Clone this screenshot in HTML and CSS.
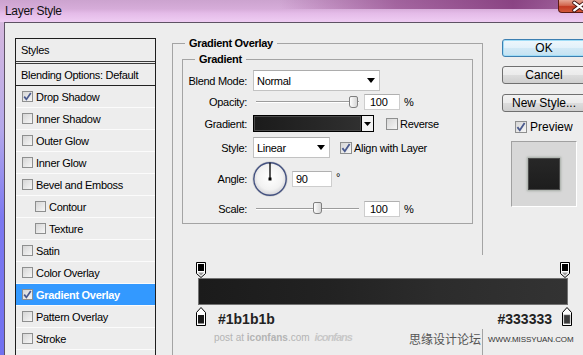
FILE: index.html
```html
<!DOCTYPE html>
<html>
<head>
<meta charset="utf-8">
<title>Layer Style</title>
<link rel="stylesheet" href="styles.css">
</head>
<body>
<div class="window">
  <div class="titlebar">
    <span class="title">Layer Style</span>
    <div class="close">
      <svg width="43" height="13" viewBox="0 0 43 13"><path d="M16 2.5L27 10.5M27 2.5L16 10.5" stroke="#3a1010" stroke-width="4.2" stroke-linecap="round"/><path d="M16 2.5L27 10.5M27 2.5L16 10.5" stroke="#fff" stroke-width="2.4" stroke-linecap="round"/></svg>
    </div>
  </div>
  <div class="frame">
    <div class="frame-edge"></div>
    <div class="dialog">
      <div class="styles-panel">
        <div class="sp-head">Styles</div>
        <div class="sp-blend">Blending Options: Default</div>
        <div class="sp-item"><span class="cb"><svg width="9" height="9" viewBox="0 0 9 9"><path d="M1.2 4.6L3.4 7.4L7.8 0.9" fill="none" stroke="#4a5a8e" stroke-width="1.7"/></svg></span>Drop Shadow</div>
        <div class="sp-item"><span class="cb"></span>Inner Shadow</div>
        <div class="sp-item"><span class="cb"></span>Outer Glow</div>
        <div class="sp-item"><span class="cb"></span>Inner Glow</div>
        <div class="sp-item"><span class="cb"></span>Bevel and Emboss</div>
        <div class="sp-item sub"><span class="cb"></span>Contour</div>
        <div class="sp-item sub"><span class="cb"></span>Texture</div>
        <div class="sp-item"><span class="cb"></span>Satin</div>
        <div class="sp-item"><span class="cb"></span>Color Overlay</div>
        <div class="sp-item active"><span class="cb"><svg width="9" height="9" viewBox="0 0 9 9"><path d="M1.2 4.6L3.4 7.4L7.8 0.9" fill="none" stroke="#4a5a8e" stroke-width="1.7"/></svg></span>Gradient Overlay</div>
        <div class="sp-item"><span class="cb"></span>Pattern Overlay</div>
        <div class="sp-item"><span class="cb"></span>Stroke</div>
        <div class="sp-item"></div>
      </div>

      <fieldset class="group outer">
        <legend>Gradient Overlay</legend>
        <fieldset class="group inner">
          <legend>Gradient</legend>
          <div class="row r1">
            <span class="lbl">Blend Mode:</span>
            <div class="select w-blend"><span>Normal</span><svg width="8" height="5" viewBox="0 0 8 5"><path d="M0 0H8L4 5Z" fill="#000"/></svg></div>
          </div>
          <div class="row r2">
            <span class="lbl">Opacity:</span>
            <div class="slider"><div class="track"></div><div class="thumb" style="left:93px"></div></div>
            <div class="input">100</div>
            <span class="unit">%</span>
          </div>
          <div class="row r3">
            <span class="lbl">Gradient:</span>
            <div class="grad-field"><div class="grad-swatch"></div><div class="grad-arrow"><svg width="7" height="4" viewBox="0 0 7 4"><path d="M0 0H7L3.5 4Z" fill="#000"/></svg></div></div>
            <span class="cb big rev"></span><span class="cb-text">Reverse</span>
          </div>
          <div class="row r4">
            <span class="lbl">Style:</span>
            <div class="select w-style"><span>Linear</span><svg width="8" height="5" viewBox="0 0 8 5"><path d="M0 0H8L4 5Z" fill="#000"/></svg></div>
            <span class="cb big align"><svg width="10" height="10" viewBox="0 0 10 10"><path d="M1.4 5.1L3.8 8.2L8.6 1" fill="none" stroke="#4a5a8e" stroke-width="1.8"/></svg></span><span class="cb-text">Align with Layer</span>
          </div>
          <div class="row r5">
            <span class="lbl">Angle:</span>
            <svg class="dial" width="36" height="36" viewBox="0 0 36 36">
              <defs><radialGradient id="dg" cx="50%" cy="45%" r="55%"><stop offset="0" stop-color="#ffffff"/><stop offset="0.7" stop-color="#f2f2f2"/><stop offset="1" stop-color="#d4d4d8"/></radialGradient></defs>
              <circle cx="18" cy="18" r="17.2" fill="none" stroke="rgba(0,0,0,0.12)" stroke-width="1"/>
              <circle cx="18" cy="18" r="16.2" fill="url(#dg)" stroke="#42507f" stroke-width="1.4"/>
              <line x1="18" y1="18" x2="18" y2="1.8" stroke="#000" stroke-width="1.3"/>
              <rect x="16.5" y="16.5" width="3" height="3" fill="#000"/>
            </svg>
            <div class="input w-angle">90</div>
            <span class="unit deg">°</span>
          </div>
          <div class="row r6">
            <span class="lbl">Scale:</span>
            <div class="slider"><div class="track"></div><div class="thumb" style="left:57px"></div></div>
            <div class="input">100</div>
            <span class="unit">%</span>
          </div>
        </fieldset>
      </fieldset>

      <div class="side">
        <div class="btn default">OK</div>
        <div class="btn b-cancel">Cancel</div>
        <div class="btn b-new">New Style...</div>
        <div class="preview-row"><span class="cb big"><svg width="10" height="10" viewBox="0 0 10 10"><path d="M1.4 5.1L3.8 8.2L8.6 1" fill="none" stroke="#4a5a8e" stroke-width="1.8"/></svg></span><span>Preview</span></div>
        <div class="preview-box"><div class="preview-swatch"></div></div>
      </div>
    </div>
  </div>

  <div class="editor">
    <div class="stops-top">
      <svg width="10" height="16" viewBox="0 0 10 16"><path d="M0.5 0.5H9.5V11.5L5 15.5L0.5 11.5Z" fill="#fff" stroke="#000"/><rect x="2" y="2" width="6" height="7" fill="#000"/><path d="M2 10.5H8L5 13.8Z" fill="#9a9a9a"/></svg>
      <svg width="10" height="16" viewBox="0 0 10 16"><path d="M0.5 0.5H9.5V11.5L5 15.5L0.5 11.5Z" fill="#fff" stroke="#000"/><rect x="2" y="2" width="6" height="7" fill="#000"/><path d="M2 10.5H8L5 13.8Z" fill="#9a9a9a"/></svg>
    </div>
    <div class="gbar"></div>
    <div class="stops-bottom">
      <div class="stop-group">
        <svg width="10" height="19" viewBox="0 0 10 19"><path d="M5 0.5L9.5 5.5V18.5H0.5V5.5Z" fill="#fff" stroke="#000"/><rect x="2" y="8" width="6" height="8.5" fill="#1b1b1b"/></svg>
        <span class="hex left">#1b1b1b</span>
      </div>
      <div class="stop-group">
        <span class="hex right">#333333</span>
        <svg width="10" height="19" viewBox="0 0 10 19"><path d="M5 0.5L9.5 5.5V18.5H0.5V5.5Z" fill="#fff" stroke="#000"/><rect x="2" y="8" width="6" height="8.5" fill="#3c3c3c" stroke="#777" stroke-width="0.6"/></svg>
      </div>
    </div>
  </div>

  <div class="wm-iconfans"><span>post at <b>iconfans</b>.com</span><span class="logo">iconfans</span></div>
  <div class="wm-missyuan"><span class="cn">思缘设计论坛</span><span class="url">WWW.MISSYUAN.COM</span></div>
</div>
</body>
</html>
```

FILE: styles.css
```css
* { box-sizing: border-box; }
html, body { margin: 0; padding: 0; }
body {
  width: 583px;
  height: 355px;
  overflow: hidden;
  font-family: "Liberation Sans", Arial, sans-serif;
  font-size: 11px;
  letter-spacing: -0.3px;
  color: #000;
  background: #ededed;
}
.window {
  position: relative;
  width: 583px;
  height: 355px;
  overflow: hidden;
  display: flex;
  flex-direction: column;
}

/* title bar */
.titlebar {
  height: 22px;
  flex: none;
  display: flex;
  background:
    linear-gradient(to right, rgba(125,45,115,0) 48%, rgba(125,45,115,0.55) 68%, rgba(115,35,105,0.75) 88%, rgba(115,35,105,0.5) 100%) top left / 100% 9px no-repeat,
    linear-gradient(#cca3cf 0%, #d6acd9 40%, #e4bbe8 60%, #efcdf3 100%);
}
.title {
  padding-left: 5px;
  line-height: 22px;
  font-size: 12px;
  letter-spacing: -0.3px;
  color: #111;
}
.close {
  margin-left: auto;
  margin-right: -18px;
  width: 43px;
  height: 13px;
  border: 1px solid #5c1b14;
  border-top: 0;
  border-radius: 0 0 4px 4px;
  background: linear-gradient(#e6a594, #d2674f 45%, #c23a22 55%, #d2593b);
  display: flex;
}

/* frame */
.frame {
  flex: 1;
  display: flex;
}
.frame-edge {
  width: 4px;
  flex: none;
  background: linear-gradient(#d6b8de 0, #b4a8ea 30%, #7c78f0 55%, #6f6ff0 100%);
}
.dialog {
  flex: 1;
  display: flex;
  align-items: flex-start;
  border-top: 1px solid #5e5264;
  border-left: 1px solid #5e5264;
  background: #ededed;
  padding-left: 10px;
}

/* styles list */
.styles-panel {
  flex: none;
  width: 141px;
  height: 340px;
  margin-top: 15px;
  border: 1px solid #1e1e1e;
}
.sp-head {
  height: 25px;
  display: flex;
  align-items: center;
  padding-left: 5px;
  border-bottom: 3px double #3a3a3a;
}
.sp-blend {
  height: 22px;
  display: flex;
  align-items: center;
  padding-left: 5px;
  border-bottom: 1px solid #222;
}
.sp-item {
  height: 22px;
  display: flex;
  align-items: center;
  gap: 3px;
  padding-left: 6px;
  border-bottom: 1px solid #fbfbfb;
}
.sp-item.sub { padding-left: 19px; }
.sp-item.active {
  background: #3399ff;
  color: #fff;
  font-weight: bold;
}
.cb {
  flex: none;
  width: 11px;
  height: 11px;
  border: 1px solid #8e8f8f;
  background: linear-gradient(135deg, #d6d6d6, #f6f6f6);
  display: flex;
  align-items: center;
  justify-content: center;
}
.cb.big { width: 12px; height: 12px; }

/* group boxes */
fieldset.group {
  margin: 0;
  min-width: 0;
  border: 1px solid #a4a4a4;
}
fieldset.group > legend {
  padding: 0 4px;
  font-weight: bold;
  line-height: 14px;
}
.outer {
  flex: none;
  width: 311px;
  height: 340px;
  margin-top: 13px !important;
  margin-left: 16px !important;
  padding: 2px 9px 0;
}
.outer > legend { margin-left: 3px; }
.inner {
  width: 291px;
  padding: 4px 0 6px;
}
.inner > legend { margin-left: 12px; }

.row {
  display: flex;
  align-items: center;
}
.r1 { height: 21px; }
.r2 { height: 20px; margin-top: 1px; }
.r3 { height: 21px; margin-top: 1px; }
.r4 { height: 21px; margin-top: 3px; }
.r5 { height: 36px; margin-top: 3px; }
.r6 { height: 17px; margin-top: 3px; }
.lbl {
  flex: none;
  width: 64px;
  margin-right: 6px;
  text-align: right;
}
.select {
  height: 21px;
  background: #fff;
  border: 1px solid #c2c2c2;
  border-top-color: #acacac;
  display: flex;
  align-items: center;
  justify-content: space-between;
  padding: 0 4px 0 3px;
}
.w-blend { width: 127px; }
.w-style { width: 77px; }
.slider {
  position: relative;
  width: 103px;
  height: 13px;
  margin-left: 3px;
  display: flex;
  align-items: center;
}
.track {
  flex: 1;
  height: 2px;
  border-top: 1px solid #9c9c9c;
  border-bottom: 1px solid #fff;
}
.thumb {
  position: absolute;
  top: 0;
  width: 9px;
  height: 12px;
  border: 1px solid #7f7f7f;
  border-radius: 2px 2px 3px 3px;
  background: linear-gradient(to right, #fdfdfd, #d6d6d6);
}
.input {
  width: 36px;
  height: 16px;
  margin-left: 5px;
  background: #fff;
  border: 1px solid #cdcdcd;
  border-top-color: #b0b0b0;
  padding-left: 5px;
  display: flex;
  align-items: center;
}
.w-angle { width: 40px; margin-left: 4px; padding-left: 3px; }
.unit { margin-left: 4px; }
.deg { margin-left: 4px; margin-bottom: 4px; }
.grad-field {
  width: 121px;
  height: 17px;
  border: 1px solid #000;
  display: flex;
}
.grad-swatch {
  flex: 1;
  background: linear-gradient(to right, #1b1b1b, #262626 55%, #303030);
  box-shadow: inset 0 0 0 1px #4a4a4a;
}
.grad-arrow {
  width: 12px;
  border-left: 1px solid #000;
  background: #f2f2f2;
  display: flex;
  align-items: center;
  justify-content: center;
}
.rev { margin-left: 12px; }
.align { margin-left: 10px; }
.cb-text { margin-left: 2px; }
.dial { flex: none; margin-left: -1px; }

/* right column */
.side {
  flex: none;
  width: 84px;
  margin-left: 19px;
  margin-top: 16px;
  display: flex;
  flex-direction: column;
  font-size: 12px;
  letter-spacing: 0;
}
.btn {
  height: 18px;
  border: 1px solid #707070;
  border-radius: 3px;
  background: linear-gradient(#f2f2f2 0%, #ebebeb 50%, #dddddd 50%, #cfcfcf 100%);
  display: flex;
  align-items: center;
  justify-content: center;
}
.btn.default {
  border-color: #3c7fb1;
  box-shadow: inset 0 0 0 1px #9fdcf6;
  background: linear-gradient(#eef7fc 0%, #e2f1fa 50%, #d2e9f6 50%, #c4e2f2 100%);
}
.b-cancel { margin-top: 9px; }
.b-new { margin-top: 10px; }
.preview-row {
  margin-top: 8px;
  height: 14px;
  padding-left: 13px;
  display: flex;
  align-items: center;
  gap: 3px;
}
.preview-box {
  margin-top: 7px;
  margin-left: 9px;
  width: 66px;
  height: 66px;
  border: 1px solid;
  border-color: #a0a0a0 #fff #fff #a0a0a0;
  background: #d7d7d7;
  display: flex;
  align-items: center;
  justify-content: center;
}
.preview-swatch {
  width: 32px;
  height: 32px;
  border: 1px solid #4a4a4a;
  background: linear-gradient(#272727, #1d1d1d);
  box-shadow: 0 0 2px 1px rgba(120, 135, 120, 0.55);
}

/* gradient editor overlay */
.editor {
  position: absolute;
  left: 178px;
  top: 255px;
  width: 405px;
  height: 74px;
  background: #ededed;
  display: flex;
  flex-direction: column;
}
.stops-top {
  margin-top: 7px;
  height: 16px;
  padding: 0 13px 0 18px;
  display: flex;
  justify-content: space-between;
}
.gbar {
  margin-left: 20px;
  width: 370px;
  height: 27px;
  border: 1px solid #727272;
  background: linear-gradient(to right, #1b1b1b 0%, #222 35%, #2c2c2c 65%, #333333 100%);
}
.stops-bottom {
  margin-top: 2px;
  height: 19px;
  padding: 0 11px 0 18px;
  display: flex;
  justify-content: space-between;
  align-items: center;
}
.stop-group {
  display: flex;
  align-items: center;
}
.hex {
  font-size: 14px;
  font-weight: bold;
  letter-spacing: 0;
  color: #222;
  padding-top: 4px;
}
.hex.left { margin-left: 12px; }
.hex.right { margin-right: 10px; }

/* watermarks */
.wm-iconfans {
  position: absolute;
  left: 214px;
  top: 331px;
  display: flex;
  align-items: baseline;
  font-size: 10px;
  letter-spacing: 0;
  line-height: 13px;
  color: #b4b4b4;
}
.wm-iconfans .logo {
  margin-left: 5px;
  font-size: 11px;
  font-weight: bold;
  font-style: italic;
  letter-spacing: -1px;
  color: #c8c8c8;
}
.wm-missyuan {
  position: absolute;
  left: 409px;
  top: 331px;
  display: flex;
  align-items: center;
  letter-spacing: 0;
}
.wm-missyuan .cn {
  font-family: "Noto Sans CJK SC", sans-serif;
  font-size: 12px;
  line-height: 16px;
  color: #555;
}
.wm-missyuan .url {
  margin-left: 7px;
  font-size: 8px;
  letter-spacing: -0.1px;
  color: #333;
}
```
